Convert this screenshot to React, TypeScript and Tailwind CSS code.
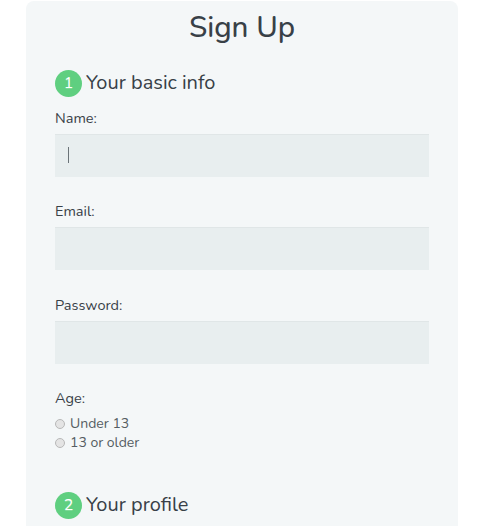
import "react";

const font = { fontFamily: "Nunito, Lato, 'Open Sans', sans-serif" };

function Field({ label, type, id, caret, gap = 24 }: { label: string; type: string; id: string; caret?: boolean; gap?: number }) {
  return (
    <div className={gap === 25 ? "mb-[25px]" : "mb-[24px]"}>
      <label htmlFor={id} className="block h-[20px] text-[14.5px] leading-[20px] mb-[6px]">
        {label}
      </label>
      <div className="relative">
        <input
          id={id}
          type={type}
          className="block w-full h-[43px] bg-[#e8eeef] text-[#8a97a0] px-[13px] text-[16px] outline-none caret-transparent shadow-[inset_0_1px_rgba(0,0,0,0.03)]"
        />
        {caret && <span className="absolute left-[13px] top-[13px] w-px h-[16px] bg-[#6b7378]" />}
      </div>
    </div>
  );
}

function Legend({ n, title }: { n: number; title: string }) {
  return (
    <div className="flex items-center gap-[4px]">
      <span className="w-[27px] h-[27px] rounded-full bg-[#5fcf80] text-white text-[16px] leading-[27px] text-center [text-shadow:0_1px_0_rgba(255,255,255,0.2)]">
        {n}
      </span>
      <span className="text-[20px] leading-[25px] pb-[2px]">{title}</span>
    </div>
  );
}

function Radio({ label, id }: { label: string; id: string }) {
  return (
    <div className="flex items-center h-[19px]">
      <input
        id={id}
        type="radio"
        name="age"
        className="appearance-none w-[10px] h-[10px] rounded-full border border-[#b8b8b8] bg-[#e4e4e4] mr-[5px]"
      />
      <label htmlFor={id} className="text-[14px] text-[#555d62]">
        {label}
      </label>
    </div>
  );
}

export default function App() {
  return (
    <div className="min-h-[526px] bg-white text-[#384047] pt-[1px]" style={font}>
      <form className="ml-[26px] w-[432px] rounded-lg bg-[#f4f7f8] px-[29px] pt-[6px] pb-[20px]">
        <h1 className="h-[40px] text-[29.5px] font-medium leading-[40px] text-center">Sign Up</h1>
        <div className="mt-[23px]">
          <Legend n={1} title="Your basic info" />
        </div>
        <div className="mt-[11px]">
          <Field label="Name:" type="text" id="name" caret />
          <Field label="Email:" type="email" id="mail" gap={25} />
          <Field label="Password:" type="password" id="password" />
          <label className="block h-[20px] text-[14.5px] leading-[20px] mb-[6px]">Age:</label>
          <Radio id="under_13" label="Under 13" />
          <Radio id="over_13" label="13 or older" />
        </div>
        <div className="mt-[40px]">
          <Legend n={2} title="Your profile" />
        </div>
      </form>
    </div>
  );
}
